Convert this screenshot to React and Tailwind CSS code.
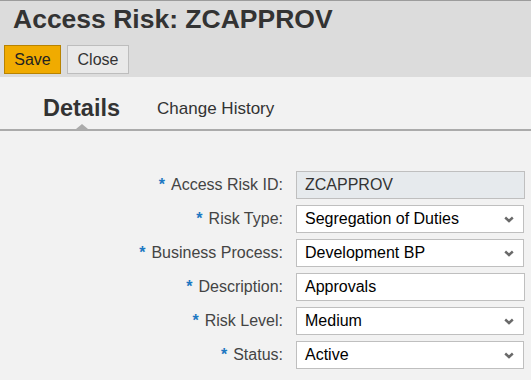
import React from 'react'

const fields = [
  { label: 'Access Risk ID', value: 'ZCAPPROV', kind: 'readonly' },
  { label: 'Risk Type', value: 'Segregation of Duties', kind: 'select' },
  { label: 'Business Process', value: 'Development BP', kind: 'select' },
  { label: 'Description', value: 'Approvals', kind: 'text' },
  { label: 'Risk Level', value: 'Medium', kind: 'select' },
  { label: 'Status', value: 'Active', kind: 'select' }
]

function Chevron() {
  return (
    <svg width="10" height="7" viewBox="0 0 10 7" className="shrink-0">
      <path d="M1.2 1.5 L5 5 L8.8 1.5" fill="none" stroke="#6a6a6a" strokeWidth="2.4" />
    </svg>
  )
}

function Field({ field }) {
  const base = 'h-[28px] flex items-center border border-[#bfbfbf] pl-[8px] text-[16px] text-[#000]'
  if (field.kind === 'readonly') {
    return <div className={`${base} w-[229px] bg-[#e6eaed] text-[#333]`}>{field.value}</div>
  }
  if (field.kind === 'text') {
    return <div className={`${base} w-[229px] bg-white`}>{field.value}</div>
  }
  return (
    <div className={`${base} w-[228px] bg-white justify-between pr-[9px]`}>
      <span>{field.value}</span>
      <Chevron />
    </div>
  )
}

export default function App() {
  return (
    <div className="w-[531px] h-[380px] overflow-hidden bg-[#f2f2f2] font-['Liberation_Sans',Arial,sans-serif]">
      {/* header */}
      <div className="bg-[#dcdcdc] border-t border-[#9c9c9c] pb-[3px]">
        <h1 className="pl-[13px] pt-[4px] text-[26.5px] leading-[28px] font-bold text-[#333]">
          Access Risk: ZCAPPROV
        </h1>
        <div className="flex gap-[6px] pl-[4px] mt-[12px]">
          <button className="w-[57px] h-[29px] bg-[#f0ab00] border border-[#b88300] text-[16px] text-[#222]">
            Save
          </button>
          <button className="w-[62px] h-[29px] bg-[#e9e9e9] border border-[#bdbdbd] text-[16px] text-[#333]">
            Close
          </button>
        </div>
      </div>

      {/* tabs */}
      <div className="h-[54px] border-b-2 border-[#ababab] flex items-end pl-[43px] gap-[37px]">
        <div className="relative h-full flex items-center pt-[11px]">
          <span className="text-[23.5px] font-bold text-[#333]">Details</span>
          <span className="absolute bottom-0 left-1/2 -translate-x-1/2 w-0 h-0 border-l-[6px] border-r-[6px] border-b-[5px] border-l-transparent border-r-transparent border-b-[#ababab]" />
        </div>
        <div className="h-full flex items-center pt-[11px]">
          <span className="text-[17px] text-[#333]">Change History</span>
        </div>
      </div>

      {/* form */}
      <div className="pt-[40px] flex flex-col gap-[6px]">
        {fields.map((f) => (
          <div key={f.label} className="flex items-center">
            <div className="w-[283px] text-right text-[16px] text-[#444]">
              <span className="text-[#1e78c2] font-bold mr-[6px]">*</span>
              {f.label}:
            </div>
            <div className="ml-[13px]">
              <Field field={f} />
            </div>
          </div>
        ))}
      </div>
    </div>
  )
}
